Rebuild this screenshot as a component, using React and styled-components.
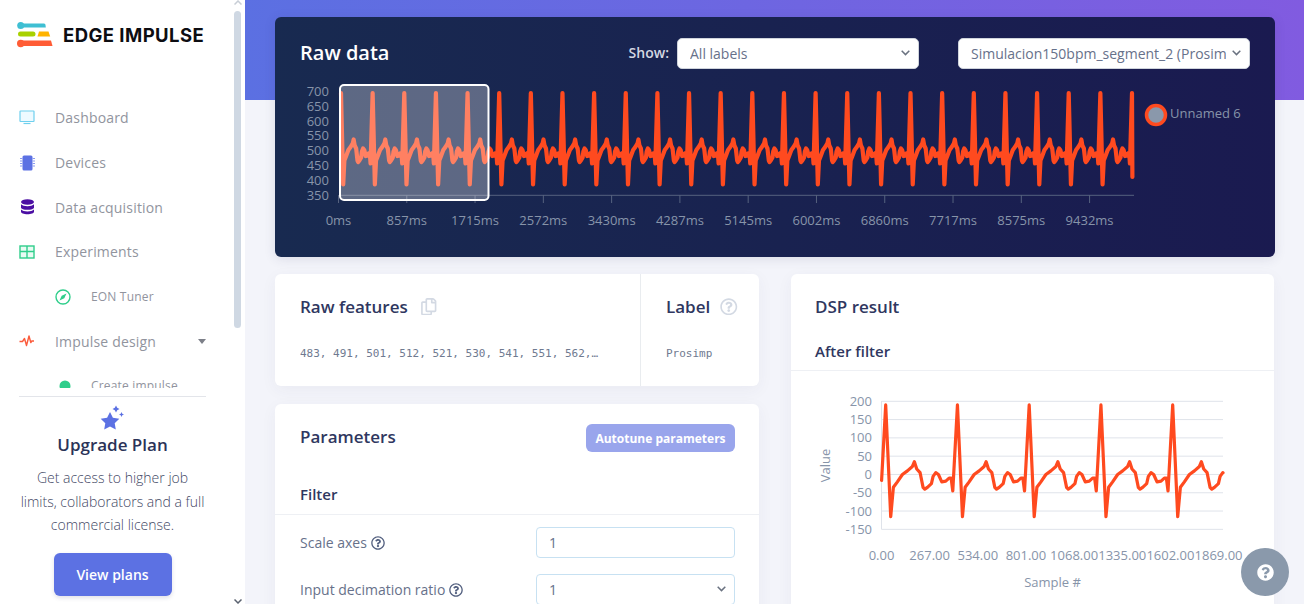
import React from "react";
import styled, { createGlobalStyle } from "styled-components";
import { FaRegCopy, FaRegQuestionCircle, FaQuestionCircle } from "react-icons/fa";

const Global = createGlobalStyle`
  html, body { margin: 0; padding: 0; height: 604px; overflow: hidden; background: #f3f4fa; }
  body { font-family: "Open Sans", "Liberation Sans", sans-serif; }
  * { box-sizing: border-box; }
`;

const Page = styled.div`
  display: flex;
  width: 1304px;
  height: 604px;
  overflow: hidden;
`;

const Sidebar = styled.aside`
  position: relative;
  flex: 0 0 245px;
  height: 604px;
  background: #fff;
  display: flex;
  flex-direction: column;
`;

const ScrollArrow = styled.div`
  position: absolute;
  left: 234px;
  width: 8px;
  height: 5px;
  ${(p) => (p.$down ? "bottom: 0;" : "top: 0;")}
  svg { display: block; }
`;

const ScrollThumb = styled.div`
  position: absolute;
  left: 234px;
  top: 11px;
  width: 7px;
  height: 317px;
  border-radius: 4px;
  background: #cfd8e3;
`;

const LogoRow = styled.div`
  flex: 0 0 95.5px;
  display: flex;
  align-items: flex-start;
  padding: 22px 0 0 17px;
  gap: 10px;
`;

const LogoText = styled.span`
  font-family: "Inter", sans-serif;
  font-weight: 700;
  font-size: 18.5px;
  line-height: 26px;
  color: #0d0d12;
  letter-spacing: 0.45px;
`;

const Nav = styled.nav`
  flex: 0 0 292.5px;
  overflow: hidden;
`;

const NavItem = styled.div`
  display: flex;
  align-items: center;
  height: 44.7px;
  padding-left: ${(p) => (p.$sub ? "55px" : "19px")};
  padding-right: 39px;
  color: #91949e;
  font-size: ${(p) => (p.$sub ? "12px" : "14px")};
  letter-spacing: 0.18px;
`;

const NavIcon = styled.span`
  flex: 0 0 36px;
  display: flex;
  align-items: center;
  svg { display: block; }
`;

const NavLabel = styled.span`
  flex: 1;
`;

const Caret = styled.span`
  width: 0;
  height: 0;
  border-left: 4.5px solid transparent;
  border-right: 4.5px solid transparent;
  border-top: 5px solid #7c7f88;
`;

const Upgrade = styled.section`
  margin: 8px 39px 0 19px;
  border-top: 1px solid #e3e5ea;
  display: flex;
  flex-direction: column;
  align-items: center;
  text-align: center;
  padding-top: 8px;
`;

const UpgradeTitle = styled.h3`
  margin: 3px 0 10px;
  font-size: 17px;
  line-height: 22px;
  font-weight: 600;
  color: #2b3358;
`;

const UpgradeText = styled.p`
  margin: 0;
  font-size: 14px;
  font-weight: 300;
  line-height: 23.5px;
  color: #3f4764;
`;

const UpgradeButton = styled.button`
  margin-top: 16px;
  width: 118px;
  height: 43px;
  border: 0;
  border-radius: 6px;
  background: #5c71e3;
  color: #fff;
  font: 600 14px "Open Sans", sans-serif;
  box-shadow: 0 2px 4px rgba(50, 50, 93, 0.15);
`;

const Main = styled.main`
  flex: 1;
  height: 604px;
  overflow: hidden;
  padding: 17px 29px 0 30px;
  background: linear-gradient(87deg, #5b70e2 0%, #815be0 100%) top / 100% 100px no-repeat, #f3f4fa;
`;

const DarkCard = styled.section`
  height: 240px;
  border-radius: 6px;
  background: linear-gradient(87deg, #182a50 0%, #1a1a50 100%);
  box-shadow: 0 2px 12px rgba(50, 50, 93, 0.12);
`;

const DarkHeader = styled.header`
  height: 53px;
  display: flex;
  align-items: flex-start;
  padding: 21px 25px 0;
`;

const DarkTitle = styled.h2`
  flex: 1;
  margin: 0;
  font-size: 20px;
  line-height: 30px;
  font-weight: 600;
  color: #fff;
`;

const ShowLabel = styled.label`
  font-size: 14px;
  font-weight: 600;
  line-height: 30px;
  color: #d4d8e2;
  margin-right: 8px;
`;

const SelectWrap = styled.span`
  position: relative;
  display: block;
  flex: 0 0 ${(p) => p.$w}px;
  height: 31px;
  margin-left: ${(p) => p.$ml || 0}px;
  svg { position: absolute; right: 9px; top: 12px; display: block; pointer-events: none; }
`;

const NativeSelect = styled.select`
  appearance: none;
  display: block;
  width: 100%;
  height: 31px;
  padding: 0 23px 0 12px;
  border: 1px solid ${(p) => (p.$soft ? "#c7e1f2" : "#cfd4dc")};
  border-radius: ${(p) => (p.$soft ? 4 : 5)}px;
  background-color: #fff;
  color: #67718a;
  font: 14px "Open Sans", sans-serif;
`;

const Chevron = () => (
  <svg width="9" height="6" viewBox="0 0 9 6">
    <path d="M0.700 0.800 4.500 4.600 8.300 0.800" fill="none" stroke="#6a7280" strokeWidth="1.500" />
  </svg>
);

const ChartSvg = styled.svg`
  display: block;
`;

const AxisText = styled.text`
  font-family: "Open Sans", sans-serif;
  font-size: 13px;
  fill: #8794a9;
`;

const Columns = styled.div`
  margin-top: 17px;
  display: grid;
  grid-template-columns: 484px 483px;
  column-gap: 32px;
  align-items: start;
`;

const Stack = styled.div`
  display: flex;
  flex-direction: column;
  gap: 18px;
`;

const Card = styled.section`
  background: #fff;
  border-radius: 6px;
  box-shadow: 0 4px 16px rgba(50, 50, 93, 0.05);
  overflow: hidden;
`;

const FeaturesCard = styled(Card)`
  height: 112px;
  display: grid;
  grid-template-columns: 365px 1fr;
`;

const FeatureCell = styled.div`
  padding: 21px 25px 0;
  & + & { border-left: 1px solid #e9ecef; }
`;

const CardTitle = styled.h3`
  display: flex;
  align-items: center;
  gap: ${(p) => p.$gap || 12}px;
  margin: 0;
  height: 23px;
  font-size: 17px;
  font-weight: 600;
  color: #2f3760;
  svg { display: block; color: #d3d9e3; font-size: 17.5px; }
`;

const ParamsTitle = styled(CardTitle)`
  margin-top: 1px;
`;

const Mono = styled.div`
  margin-top: 28px;
  width: 300px;
  font: 11px/16px "DejaVu Sans Mono", monospace;
  color: #6f7a90;
  white-space: nowrap;
  overflow: hidden;
  text-overflow: ellipsis;
`;

const ParamsCard = styled(Card)`
  height: 240px;
`;

const ParamsHead = styled.div`
  height: 66px;
  display: flex;
  justify-content: space-between;
  align-items: flex-start;
  padding: 20px 24px 0 25px;
`;

const AutotuneButton = styled.button`
  width: 149px;
  height: 28px;
  border: 0;
  border-radius: 6px;
  background: #99a5ec;
  color: #fff;
  font: 700 12px "Open Sans", sans-serif;
`;

const SectionHead = styled.div`
  height: 45px;
  padding: 14px 25px 0;
  border-bottom: 1px solid #eef0f4;
  font-size: 15px;
  line-height: 20px;
  font-weight: 600;
  color: #2f3760;
`;

const ParamRows = styled.div`
  display: flex;
  flex-direction: column;
  gap: 16px;
  padding: 12px 24px 0 25px;
`;

const ParamRow = styled.div`
  display: grid;
  grid-template-columns: 236px 199px;
  align-items: center;
  height: 31px;
`;

const ParamLabel = styled.label`
  display: flex;
  align-items: center;
  gap: 4px;
  font-size: 14px;
  color: #67718a;
  svg { display: block; color: #525f7f; font-size: 14px; }
`;

const ParamInput = styled.input`
  width: 199px;
  height: 31px;
  padding: 0 12px;
  border: 1px solid #c7e1f2;
  border-radius: 4px;
  background-color: #fff;
  color: #67718a;
  font: 14px "Open Sans", sans-serif;
`;

const DspCard = styled(Card)`
  height: 340px;
`;

const DspHead = styled.div`
  padding: 21px 24px 0;
`;

const SubHead = styled.div`
  height: 44px;
  margin-top: 9px;
  padding: 14px 24px 0;
  border-bottom: 1px solid #eef0f4;
  font-size: 15px;
  line-height: 20px;
  font-weight: 600;
  color: #2f3760;
`;

const HelpFab = styled.button`
  position: absolute;
  left: 1241px;
  top: 548px;
  width: 48px;
  height: 48px;
  border: 0;
  padding: 0;
  border-radius: 50%;
  background: #8a99ab;
  display: flex;
  align-items: center;
  justify-content: center;
  color: #fff;
  svg { display: block; font-size: 17px; }
`;

const SHAPE = [
  [0, 190], [15, -115], [23, -35], [35, -20], [50, 0], [65, 10], [80, 22], [86, 35], [93, 15], [103, 5],
  [112, -35], [117, -40], [125, -35], [137, -25], [142, -5], [150, 5], [158, 0], [168, -20], [180, -18],
  [190, -10], [196, -10], [201, -45],
];

function trace(x0, x1, firstPeak, period, toY, extra = []) {
  const pts = [];
  for (let k = -1; k < 40; k++) {
    SHAPE.forEach(([ph, v]) => pts.push([firstPeak + (k + ph / 215) * period, toY(v)]));
  }
  const out = [];
  for (let i = 0; i < pts.length - 1; i++) {
    const [ax, ay] = pts[i];
    const [bx, by] = pts[i + 1];
    if (bx < x0 || ax > x1) continue;
    if (ax < x0) out.push([x0, ay + ((x0 - ax) / (bx - ax)) * (by - ay)]);
    else out.push([ax, ay]);
    if (bx > x1) out.push([x1, ay + ((x1 - ax) / (bx - ax)) * (by - ay)]);
  }
  return [...out, ...extra].map((p) => `${p[0].toFixed(2)},${p[1].toFixed(2)}`).join(" ");
}

const RAW_Y = [[700, 91], [650, 106], [600, 121], [550, 135.5], [500, 150.5], [450, 165], [400, 180], [350, 195]];
const RAW_X = ["0ms", "857ms", "1715ms", "2572ms", "3430ms", "4287ms", "5145ms", "6002ms", "6860ms", "7717ms", "8575ms", "9432ms"];

function RawChart() {
  const points = trace(341, 1132, 341, 31.64, (v) => 93 + (190 - v) * 0.3, [[1132.4, 177]]);
  return (
    <ChartSvg width="1000" height="170" viewBox="275 70 1000 170">
      <line x1="339" x2="1134" y1="195.3" y2="195.3" stroke="#56627f" />
      {RAW_X.map((t, i) => {
        const x = 338.5 + i * 68.28;
        return (
          <g key={t}>
            <line x1={x} x2={x} y1="195" y2="203" stroke="#56627f" />
            <AxisText x={x} y="225" textAnchor="middle">{t}</AxisText>
          </g>
        );
      })}
      {RAW_Y.map(([v, y]) => (
        <AxisText key={v} x="329" y={y + 4.5} textAnchor="end">{v}</AxisText>
      ))}
      <polyline points={points} fill="none" stroke="#ff4a1f" strokeWidth="4.2" strokeLinejoin="round" strokeLinecap="round" />
      <rect x="340" y="85" width="148.500" height="115" rx="4" fill="rgba(255,255,255,0.3)" stroke="#fff" strokeWidth="2" />
      <circle cx="1156" cy="115" r="9.500" fill="#8a98ab" stroke="#ff4a1f" strokeWidth="3.500" />
      <AxisText x="1170" y="118">Unnamed 6</AxisText>
    </ChartSvg>
  );
}

const DSP_Y = [200, 150, 100, 50, 0, -50, -100, -150];
const DSP_X = ["0.00", "267.00", "534.00", "801.00", "1068.00", "1335.00", "1602.00", "1869.00"];

function DspChart() {
  const points = trace(881.6, 1223, 885.7, 71.75, (v) => 474.5 - v * 0.366);
  return (
    <ChartSvg width="483" height="233" viewBox="791 371 483 233">
      {DSP_Y.map((v, i) => {
        const y = 401.3 + i * 18.29;
        return (
          <g key={v}>
            <line x1="881.5" x2="1223" y1={y} y2={y} stroke="#dfe3ea" />
            <AxisText x="872" y={y + 4.5} textAnchor="end">{v}</AxisText>
          </g>
        );
      })}
      <line x1="881.5" x2="881.5" y1="401" y2="529.3" stroke="#dfe3ea" />
      <polyline points={points} fill="none" stroke="#ff4a1f" strokeWidth="3.200" strokeLinejoin="round" strokeLinecap="round" />
      {DSP_X.map((t, i) => (
        <AxisText key={t} x={881.5 + i * 48.15} y="560" textAnchor="middle">{t}</AxisText>
      ))}
      <AxisText x="1052.5" y="587" textAnchor="middle">Sample #</AxisText>
      <AxisText transform="translate(830 465.5) rotate(-90)" textAnchor="middle">Value</AxisText>
    </ChartSvg>
  );
}

const MonitorIcon = () => (
  <svg width="16" height="15" viewBox="0 0 16 15" fill="none">
    <rect x="1" y="1" width="14" height="10.500" rx="0.500" stroke="#6fd0ee" strokeWidth="1.200" fill="#eefaff" />
    <path d="M4.500 13.500h7" stroke="#6fd0ee" strokeWidth="1.200" />
  </svg>
);
const ChipIcon = () => (
  <svg width="16" height="16" viewBox="0 0 16 16" fill="none">
    <rect x="3.500" y="0.500" width="10" height="15" rx="1.500" fill="#5c71e3" />
    <path d="M1 3.500h2.500M1 6h2.500M1 8.500h2.500M1 11h2.500M13.500 3.500h2.500M13.500 6h2.500M13.500 8.500h2.500M13.500 11h2.500" stroke="#8b9bf0" strokeWidth="1" />
  </svg>
);
const DbIcon = () => (
  <svg width="15" height="16" viewBox="0 0 15 16" style={{ marginLeft: 1 }}>
    <ellipse cx="7.500" cy="3" rx="6.500" ry="2.800" fill="#4b0ea3" />
    <path d="M1 5.200c1.200 1.300 3.600 2 6.500 2s5.300-.7 6.500-2v3.200c0 1.400-2.900 2.300-6.500 2.300S1 9.800 1 8.400z" fill="#4b0ea3" />
    <path d="M1 10.400c1.200 1.300 3.600 2 6.500 2s5.300-.7 6.500-2v2.400c0 1.500-2.900 2.500-6.500 2.500S1 14.300 1 12.800z" fill="#4b0ea3" />
  </svg>
);
const TableIcon = () => (
  <svg width="16" height="14" viewBox="0 0 16 14" fill="none">
    <rect x="1" y="1" width="14" height="12" fill="#e9fbf3" stroke="#2fce8b" strokeWidth="1.400" />
    <path d="M1 6.500h14M8 1v12" stroke="#2fce8b" strokeWidth="1.400" />
  </svg>
);
const CompassIcon = () => (
  <svg width="16" height="16" viewBox="0 0 16 16" fill="none">
    <circle cx="8" cy="8" r="7" stroke="#2fce8b" strokeWidth="1.400" />
    <path d="M11.500 4.500 9.300 9.300 4.500 11.500 6.700 6.700z" fill="#2fce8b" />
  </svg>
);
const PulseIcon = () => (
  <svg width="16" height="12" viewBox="0 0 16 12" fill="none">
    <path d="M0.500 6.500h3l2-3 2 7 2.500-9.500 1.800 6.500 1-1.500h2.200" stroke="#fb5b3c" strokeWidth="1.400" strokeLinejoin="round" />
  </svg>
);
const DotIcon = () => (
  <svg width="12" height="12" viewBox="0 0 12 12" style={{ marginLeft: 4 }}>
    <circle cx="6" cy="6" r="5.500" fill="#2fce8b" />
  </svg>
);
const StarIcon = () => (
  <svg width="26" height="26" viewBox="0 0 26 26">
    <path d="M10 7l2.900 5.800 6.400 1-4.600 4.500 1.100 6.300L10 21.600l-5.800 3 1.100-6.300L.7 13.800l6.400-1z" fill="#5c71e3" />
    <path d="M16 0.500l1.200 2.300 2.300 1.200-2.300 1.200L16 7.500l-1.200-2.300L12.500 4l2.300-1.200z" fill="#5c71e3" />
    <path d="M21.500 7l.8 1.700 1.700.8-1.700.8-.8 1.700-.8-1.700-1.700-.8 1.700-.8z" fill="#5c71e3" />
  </svg>
);
const Logo = () => (
  <svg width="36" height="26" viewBox="0 0 36 26">
    <circle cx="3.700" cy="3.500" r="3.500" fill="#3fbfd3" />
    <path d="M3.700 1.500H27a1.500 1.500 0 0 1 1.500 1.500l.3 2.500H3.700z" fill="#3fbfd3" />
    <rect x="1" y="9.500" width="17.500" height="5" rx="2.500" fill="#a8d100" />
    <path d="M22 9.500h9.500l1.700 5H20.500z" fill="#ffb400" />
    <circle cx="3.700" cy="21.500" r="3.700" fill="#ff5c35" />
    <path d="M3.700 18.500H34l1.500 5.500H3.700z" fill="#ff5c35" />
  </svg>
);

const NAV = [
  { label: "Dashboard", icon: <MonitorIcon /> },
  { label: "Devices", icon: <ChipIcon /> },
  { label: "Data acquisition", icon: <DbIcon /> },
  { label: "Experiments", icon: <TableIcon /> },
  { label: "EON Tuner", icon: <CompassIcon />, sub: true },
  { label: "Impulse design", icon: <PulseIcon />, caret: true },
  { label: "Create impulse", icon: <DotIcon />, sub: true },
];

export default function App() {
  return (
    <Page>
      <Global />
      <Sidebar>
        <LogoRow>
          <Logo />
          <LogoText>EDGE IMPULSE</LogoText>
        </LogoRow>
        <Nav>
          {NAV.map((n) => (
            <NavItem key={n.label} $sub={n.sub}>
              <NavIcon>{n.icon}</NavIcon>
              <NavLabel>{n.label}</NavLabel>
              {n.caret && <Caret />}
            </NavItem>
          ))}
        </Nav>
        <Upgrade>
          <StarIcon />
          <UpgradeTitle>Upgrade Plan</UpgradeTitle>
          <UpgradeText>Get access to higher job limits, collaborators and a full commercial license.</UpgradeText>
          <UpgradeButton>View plans</UpgradeButton>
        </Upgrade>
        <ScrollArrow>
          <svg width="8" height="5" viewBox="0 0 8 5"><path d="M0.500 4.500 4 1l3.500 3.500" fill="none" stroke="#c8ced6" strokeWidth="1.500" /></svg>
        </ScrollArrow>
        <ScrollThumb />
        <ScrollArrow $down>
          <svg width="8" height="5" viewBox="0 0 8 5"><path d="M0.500 0.500 4 4l3.500-3.500" fill="none" stroke="#5b6270" strokeWidth="1.500" /></svg>
        </ScrollArrow>
      </Sidebar>
      <Main>
        <DarkCard>
          <DarkHeader>
            <DarkTitle>Raw data</DarkTitle>
            <ShowLabel>Show:</ShowLabel>
            <SelectWrap $w={242}>
              <NativeSelect><option>All labels</option></NativeSelect>
              <Chevron />
            </SelectWrap>
            <SelectWrap $w={292} $ml={39}>
              <NativeSelect><option>Simulacion150bpm_segment_2 (Prosimp)</option></NativeSelect>
              <Chevron />
            </SelectWrap>
          </DarkHeader>
          <RawChart />
        </DarkCard>
        <Columns>
          <Stack>
            <FeaturesCard>
              <FeatureCell>
                <CardTitle><span>Raw features</span><FaRegCopy /></CardTitle>
                <Mono>483, 491, 501, 512, 521, 530, 541, 551, 562, 573, 585</Mono>
              </FeatureCell>
              <FeatureCell>
                <CardTitle $gap={10}><span>Label</span><FaRegQuestionCircle /></CardTitle>
                <Mono>Prosimp</Mono>
              </FeatureCell>
            </FeaturesCard>
            <ParamsCard>
              <ParamsHead>
                <ParamsTitle>Parameters</ParamsTitle>
                <AutotuneButton>Autotune parameters</AutotuneButton>
              </ParamsHead>
              <SectionHead>Filter</SectionHead>
              <ParamRows>
                <ParamRow>
                  <ParamLabel>Scale axes <FaRegQuestionCircle /></ParamLabel>
                  <ParamInput defaultValue="1" />
                </ParamRow>
                <ParamRow>
                  <ParamLabel>Input decimation ratio <FaRegQuestionCircle /></ParamLabel>
                  <SelectWrap $w={199}>
                    <NativeSelect $soft><option>1</option></NativeSelect>
                    <Chevron />
                  </SelectWrap>
                </ParamRow>
              </ParamRows>
            </ParamsCard>
          </Stack>
          <DspCard>
            <DspHead><CardTitle>DSP result</CardTitle></DspHead>
            <SubHead>After filter</SubHead>
            <DspChart />
          </DspCard>
        </Columns>
      </Main>
      <HelpFab><FaQuestionCircle /></HelpFab>
    </Page>
  );
}
